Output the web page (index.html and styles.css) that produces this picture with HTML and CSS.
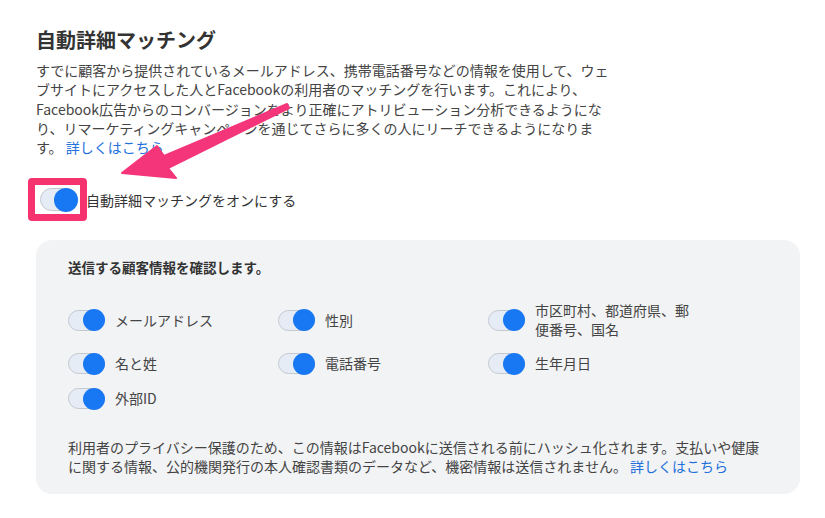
FILE: index.html
```html
<!DOCTYPE html>
<html lang="ja">
<head>
    <meta charset="UTF-8">
    <meta name="viewport" content="width=device-width, initial-scale=1.0">
    <title>自動詳細マッチング</title>
    <link rel="stylesheet" href="styles.css">
</head>
<body>
    <div class="page">
        <h1>自動詳細マッチング</h1>
        <p class="intro">すでに顧客から提供されているメールアドレス、携帯電話番号などの情報を使用して、ウェブサイトにアクセスした人とFacebookの利用者のマッチングを行います。これにより、Facebook広告からのコンバージョンをより正確にアトリビューション分析できるようになり、リマーケティングキャンペーンを通じてさらに多くの人にリーチできるようになります。 <a href="#">詳しくはこちら</a></p>

        <div class="main-switch">
            <span class="highlight"><span class="toggle big"></span></span>
            <span class="main-label">自動詳細マッチングをオンにする</span>
        </div>

        <div class="panel">
            <h2>送信する顧客情報を確認します。</h2>
            <div class="fields">
                <div class="field"><span class="toggle"></span><span>メールアドレス</span></div>
                <div class="field"><span class="toggle"></span><span>性別</span></div>
                <div class="field"><span class="toggle"></span><span>市区町村、都道府県、郵便番号、国名</span></div>
                <div class="field"><span class="toggle"></span><span>名と姓</span></div>
                <div class="field"><span class="toggle"></span><span>電話番号</span></div>
                <div class="field"><span class="toggle"></span><span>生年月日</span></div>
                <div class="field"><span class="toggle"></span><span>外部ID</span></div>
            </div>
            <p class="note">利用者のプライバシー保護のため、この情報はFacebookに送信される前にハッシュ化されます。支払いや健康に関する情報、公的機関発行の本人確認書類のデータなど、機密情報は送信されません。 <a href="#">詳しくはこちら</a></p>
        </div>
    </div>

    <!-- annotation arrow -->
    <svg class="arrow" width="825" height="518" viewBox="0 0 825 518">
        <polygon points="122,173 157,146 164,156 287,104 289,108 168,168 176,178" fill="#f5357a" stroke="#f5357a" stroke-width="2" stroke-linejoin="round"/>
    </svg>
</body>
</html>
```

FILE: styles.css
```css
body { margin: 0; background: #fff; font-family: "Noto Sans CJK JP", "Liberation Sans", sans-serif; color: #444; }
.page { padding: 26px 25px 0 36px; }
h1 { margin: 0; font-size: 20px; line-height: 28px; font-weight: bold; color: #333; }
.intro { margin: 7px 0 0; width: 576px; font-size: 14px; line-height: 19.3px; }
a { color: #216fdb; text-decoration: none; }

.main-switch { display: flex; align-items: center; margin-top: 21px; font-size: 14px; }
.highlight { display: flex; margin-left: -8px; padding: 3px 2px 3px 5px; border: 7px solid #f5336f; border-radius: 4px; }
.main-label { margin-left: -1px; color: #333; }

.toggle { display: flex; justify-content: flex-end; align-items: center; box-sizing: border-box; width: 37px; height: 21px; border: 1px solid #c4c9d0; border-radius: 11px; background: #e6ecf5; }
.toggle::after { content: ""; width: 22px; height: 22px; margin-right: -1px; border-radius: 50%; background: #1877f2; }
.toggle.big { width: 38px; height: 23px; border-radius: 12px; }
.toggle.big::after { width: 24px; height: 24px; }

.panel { margin-top: 19px; padding: 17px 32px 18px; border-radius: 16px; background: #f2f3f5; }
h2 { margin: 0; font-size: 13.5px; line-height: 20px; font-weight: bold; color: #333; }
.fields { display: grid; grid-template-columns: repeat(3, 210px); row-gap: 14px; margin-top: 24px; }
.field { display: flex; align-items: center; gap: 10px; font-size: 14px; line-height: 19px; color: #444; }
.field .toggle { flex-shrink: 0; }
.field span:last-child { max-width: 163px; }
.note { margin: 29px 0 0; font-size: 14px; line-height: 19px; }

.arrow { position: absolute; left: 0; top: 0; pointer-events: none; }
```
